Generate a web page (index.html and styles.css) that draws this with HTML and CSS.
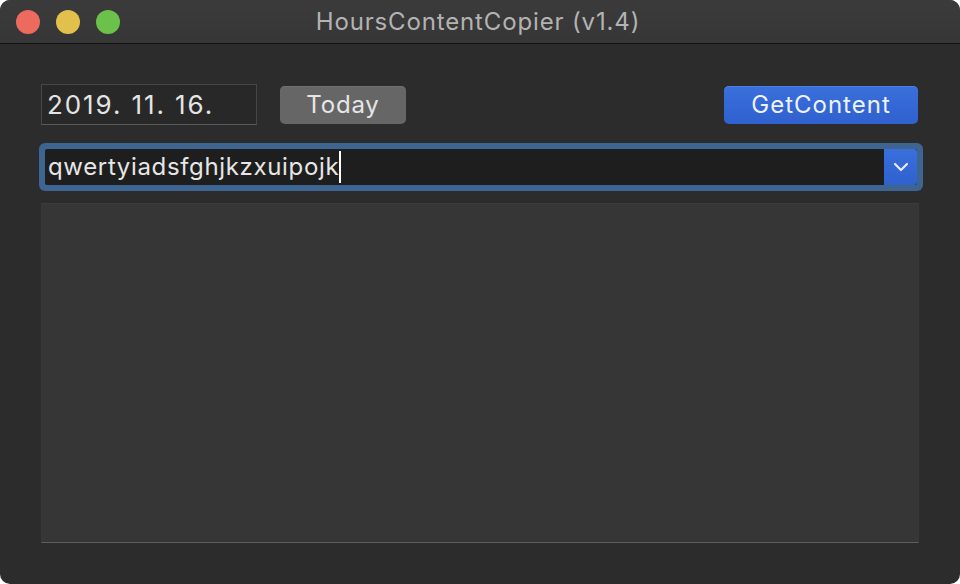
FILE: index.html
```html
<!DOCTYPE html>
<html>
<head>
<meta charset="utf-8">
<link rel="stylesheet" href="styles.css">
</head>
<body>
<div class="window">
  <div class="titlebar">
    <div class="lights">
      <span class="light red"></span>
      <span class="light yellow"></span>
      <span class="light green"></span>
    </div>
    <div class="title">HoursContentCopier (v1.4)</div>
  </div>
  <div class="content">
    <div class="toprow">
      <div class="datefield">2019. 11. 16.</div>
      <div class="btn gray">Today</div>
      <div class="spacer"></div>
      <div class="btn blue">GetContent</div>
    </div>
    <div class="combo">
      <div class="combo-text">qwertyiadsfghjkzxuipojk<span class="caret"></span></div>
      <div class="combo-arrow">
        <svg width="16" height="10" viewBox="0 0 16 10"><path d="M2 2 L8 8 L14 2" fill="none" stroke="#e8eefc" stroke-width="2.2" stroke-linecap="round" stroke-linejoin="round"/></svg>
      </div>
    </div>
    <div class="textarea"></div>
  </div>
</div>
</body>
</html>
```

FILE: styles.css
```css
html, body {
  margin: 0;
  padding: 0;
  background: #ffffff;
}
body {
  width: 960px;
  height: 584px;
  overflow: hidden;
  font-family: "Inter", "Roboto", "Liberation Sans", sans-serif;
}
.window {
  width: 960px;
  height: 584px;
  background: #2c2c2c;
  border-radius: 10px;
  overflow: hidden;
  display: flex;
  flex-direction: column;
}
.titlebar {
  height: 43px;
  background: linear-gradient(#3b3b3b, #363636);
  border-bottom: 1px solid #121212;
  position: relative;
  display: flex;
  align-items: center;
  justify-content: center;
  flex-shrink: 0;
}
.lights {
  position: absolute;
  left: 16px;
  top: 10px;
  display: flex;
  gap: 16px;
}
.light {
  width: 24px;
  height: 24px;
  border-radius: 50%;
}
.red { background: #ec6a5e; }
.yellow { background: #e1c04c; }
.green { background: #6cc14a; }
.title {
  color: #b3b3b3;
  font-size: 24px;
  letter-spacing: 0.85px;
  margin-right: 4px;
}
.content {
  flex: 1;
  padding: 40px 41px 0 41px;
  display: flex;
  flex-direction: column;
}
.toprow {
  display: flex;
  align-items: center;
  height: 41px;
}
.datefield {
  height: 39px;
  background: #282828;
  border: 1px solid #474747;
  border-bottom-color: #5a5a5a;
  color: #e4e4e4;
  font-size: 26px;
  letter-spacing: 1.9px;
  line-height: 40px;
  padding-left: 5px;
  box-sizing: content-box;
  width: 209px;
}
.btn {
  height: 38px;
  border-radius: 5px;
  font-size: 24px;
  display: flex;
  align-items: center;
  justify-content: center;
  box-sizing: border-box;
}
.btn.gray {
  margin-left: 23px;
  width: 126px;
  background: #666666;
  color: #e6e6e6;
  letter-spacing: 0.8px;
  box-shadow: inset 0 1px 0 #707070;
}
.btn.blue {
  width: 194px;
  margin-right: 1px;
  background: linear-gradient(#3a6fdc, #2f61cf);
  color: #eef2fb;
  letter-spacing: 1px;
  box-shadow: inset 0 1px 0 #4a7fe6;
}
.spacer { flex: 1; }
.combo {
  margin: 24px 2px 0 4px;
  height: 36px;
  background: #1e1e1e;
  border-radius: 2px;
  box-shadow: 0 0 0 6px #3e6591;
  display: flex;
  align-items: stretch;
}
.combo-text {
  flex: 1;
  color: #e6e6e6;
  font-size: 24px;
  letter-spacing: 0.65px;
  line-height: 36px;
  padding-left: 3px;
  display: flex;
  align-items: center;
}
.caret {
  display: inline-block;
  width: 2px;
  height: 32px;
  background: #ffffff;
  margin-left: 0;
}
.combo-arrow {
  width: 33px;
  background: linear-gradient(#3a6fdc, #2f61cf);
  border-radius: 0 3px 3px 0;
  display: flex;
  align-items: center;
  justify-content: center;
}
.textarea {
  margin-top: 18px;
  height: 338px;
  background: #363636;
  border-top: 1px solid #3c3c3c;
  border-left: 1px solid #383838;
  border-right: 1px solid #383838;
  border-bottom: 1px solid #5c5c5c;
}
```
